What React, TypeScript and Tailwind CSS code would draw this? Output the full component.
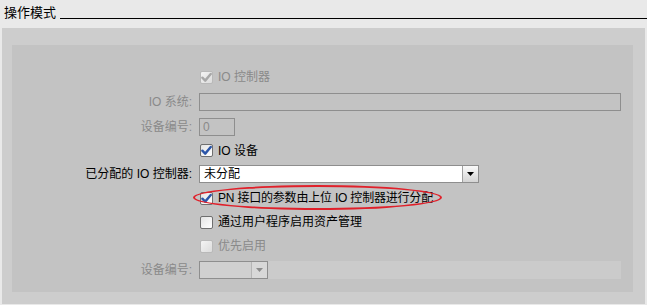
import React from 'react';

const font = { fontFamily: '"Liberation Sans", "Noto Sans CJK SC", sans-serif' };

function Check({ checked, disabled }: { checked?: boolean; disabled?: boolean }) {
  return (
    <span
      className={
        'inline-flex h-[13px] w-[13px] shrink-0 items-center justify-center rounded-[2px] border ' +
        (disabled
          ? 'border-[#b9b9b9] bg-gradient-to-br from-[#f4f4f4] to-[#dcdcdc]'
          : 'border-[#6f6f6f] bg-gradient-to-br from-[#e4e4e4] to-[#ffffff]')
      }
    >
      {checked && (
        <svg width="11" height="11" viewBox="0 0 12 12">
          <path
            d="M1.5 6.2 L4.6 9.4 L10.6 2.2"
            fill="none"
            stroke={disabled ? '#a8a8a8' : '#2b55a8'}
            strokeWidth="2.6"
            strokeLinecap="round"
            strokeLinejoin="round"
          />
        </svg>
      )}
    </span>
  );
}

function DropBtn({ disabled }: { disabled?: boolean }) {
  return (
    <span
      className={
        'flex h-full w-[16px] items-center justify-center border-l ' +
        (disabled ? 'border-[#b5b5b5] bg-[#d8d8d8]' : 'border-[#a0a0a0] bg-gradient-to-b from-[#fafafa] to-[#d4d4d4]')
      }
    >
      <svg width="7" height="4" viewBox="0 0 7 4">
        <path d="M0 0 H7 L3.5 4 Z" fill={disabled ? '#8c8c8c' : '#000'} />
      </svg>
    </span>
  );
}

export default function App() {
  const label = 'flex items-center justify-end pr-[7px]';
  return (
    <div className="h-[305px] w-[647px] overflow-hidden bg-[#e9e9e9] text-[12px]" style={font}>
      <div className="flex h-[28px] items-start pl-[4px] pt-[4px]">
        <span className="text-[13px] leading-[17px] text-black">操作模式</span>
        <span className="ml-[4px] mt-[14px] h-px flex-1 bg-black" />
      </div>
      <div className="ml-[2px] mr-[2px] bg-[#cdcdcd] pb-[12px] pl-[10px] pr-[12px] pt-[17px]">
        <div className="bg-[#c3c3c3] pb-[10px] pt-[20px]">
          <div className="grid grid-cols-[187px_1fr] pr-[12px]">
            <div className="h-[24px]" />
            <div className="flex h-[24px] items-center gap-[5px] pl-px text-[#8a8a8a]">
              <Check checked disabled />
              <span>IO 控制器</span>
            </div>

            <div className={label + ' h-[26px] text-[#8a8a8a]'}>IO 系统:</div>
            <div className="flex h-[26px] items-center">
              <div className="h-[18px] w-full border border-[#8e8e8e]" />
            </div>

            <div className={label + ' h-[24px] text-[#8a8a8a]'}>设备编号:</div>
            <div className="flex h-[24px] items-center">
              <div className="flex h-[18px] w-[36px] items-center border border-[#8e8e8e] pl-[3px] text-[#8a8a8a]">0</div>
            </div>

            <div className="h-[23px]" />
            <div className="flex h-[23px] items-center gap-[5px] pl-px text-black">
              <Check checked />
              <span>IO 设备</span>
            </div>

            <div className={label + ' h-[24px] text-black'}>已分配的 IO 控制器:</div>
            <div className="flex h-[24px] items-center">
              <div className="flex h-[18px] w-[280px] items-center border border-[#8e8e8e] bg-white">
                <span className="flex-1 pl-[4px] text-black">未分配</span>
                <DropBtn />
              </div>
            </div>

            <div className="h-[24px]" />
            <div className="relative flex h-[24px] items-center gap-[5px] pl-px text-black">
              <Check checked />
              <span className="tracking-[-0.2px]">PN 接口的参数由上位 IO 控制器进行分配</span>
              <span className="absolute left-[-6px] top-[-1px] h-[25px] w-[249px] rounded-[50%] border-2 border-[#e0202a]" />
            </div>

            <div className="h-[24px]" />
            <div className="flex h-[24px] items-center gap-[5px] pl-px text-black">
              <Check />
              <span>通过用户程序启用资产管理</span>
            </div>

            <div className="h-[24px]" />
            <div className="flex h-[24px] items-center gap-[5px] pl-px text-[#8a8a8a]">
              <Check disabled />
              <span>优先启用</span>
            </div>

            <div className={label + ' h-[24px] text-[#8a8a8a]'}>设备编号:</div>
            <div className="flex h-[24px] items-center">
              <div className="flex h-[18px] w-full items-center bg-[#cbcbcb]">
                <div className="flex h-[18px] w-[69px] items-center border border-[#8e8e8e] bg-[#d0d0d0]">
                  <span className="flex-1" />
                  <DropBtn disabled />
                </div>
              </div>
            </div>
          </div>
        </div>
      </div>
    </div>
  );
}
